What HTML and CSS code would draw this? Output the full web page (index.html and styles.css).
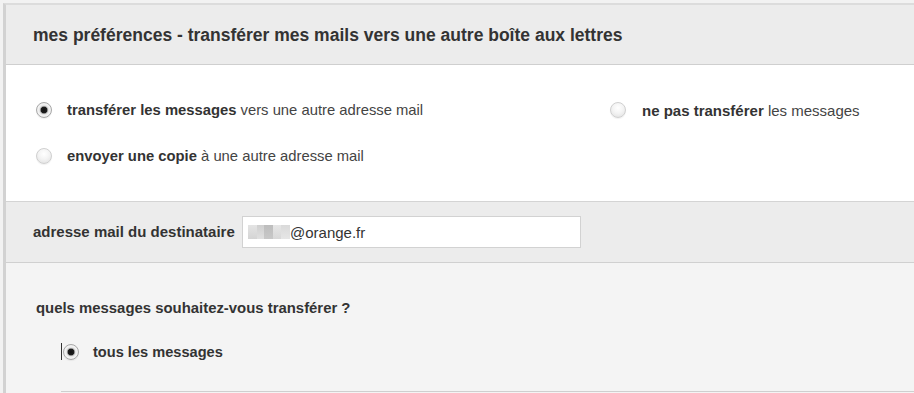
FILE: index.html
```html
<!DOCTYPE html>
<html lang="fr">
<head>
<meta charset="utf-8">
<link rel="stylesheet" href="styles.css">
</head>
<body>
<div class="page">
  <div class="header">
    <h1 class="title">mes préférences - transférer mes mails vers une autre boîte aux lettres</h1>
  </div>
  <div class="options">
    <div class="col col-left">
      <div class="opt"><span class="radio checked"></span><span class="label"><b>transférer les messages</b> vers une autre adresse mail</span></div>
      <div class="opt"><span class="radio"></span><span class="label"><b>envoyer une copie</b> à une autre adresse mail</span></div>
    </div>
    <div class="col col-right">
      <div class="opt"><span class="radio"></span><span class="label"><b>ne pas transférer</b> les messages</span></div>
    </div>
  </div>
  <div class="dest">
    <span class="dest-label">adresse mail du destinataire</span>
    <div class="input"><span class="blur"><i class="b1"></i><i class="b2"></i><i class="b3"></i><i class="b4"></i><i class="b5"></i></span>@orange.fr</div>
  </div>
  <div class="which">
    <div class="question">quels messages souhaitez-vous transférer ?</div>
    <div class="sub">
      <div class="opt opt-sub"><span class="caret"></span><span class="radio checked"></span><span class="label"><b>tous les messages</b></span></div>
    </div>
  </div>
</div>
</body>
</html>
```
FILE: styles.css
```css
html, body {
  margin: 0;
  padding: 0;
  background: #f2f2f2;
  font-family: "Liberation Sans", Arial, sans-serif;
  color: #333;
}
.page {
  margin: 3px 0 0 3px;
  border-left: 3px solid #d2d2d2;
  border-top: 2px solid #dcdcdc;
  height: 400px;
  background: #f4f4f4;
}
.header {
  background: #ececec;
  height: 59px;
  border-bottom: 1px solid #cfcfcf;
  display: flex;
  align-items: center;
  padding-left: 27px;
}
.title {
  margin: 0;
  font-size: 17.5px;
  font-weight: bold;
  color: #333;
  position: relative;
  top: 1px;
}
.options {
  background: #fff;
  height: 136px;
  border-bottom: 1px solid #d4d4d4;
  display: flex;
  padding-left: 30px;
}
.col {
  display: flex;
  flex-direction: column;
  gap: 22px;
  padding-top: 33px;
}
.col-left { width: 574px; }
.opt {
  display: flex;
  align-items: center;
  height: 24px;
  font-size: 14.8px;
  color: #444;
}
.col-right .opt { font-size: 15px; }
.opt b { color: #333; }
.radio {
  width: 16px;
  height: 16px;
  border-radius: 50%;
  border: 1px solid #d0d0d0;
  background: radial-gradient(circle at 50% 35%, #ffffff 0%, #f4f4f4 45%, #dedede 100%);
  box-sizing: border-box;
  margin-right: 15px;
  flex: none;
  box-shadow: 0 1px 1px rgba(0,0,0,0.06);
}
.col-right .radio { margin-right: 16px; }
.radio.checked {
  border-color: #a8a8a8;
  background: radial-gradient(circle, #111 0, #1e1e1e 3px, #9a9a9a 3.6px, #e4e4e4 4.5px, #f4f4f4 6px, #d6d6d6 100%);
}
.dest {
  background: #ececec;
  height: 60px;
  border-bottom: 1px solid #d0d0d0;
  display: flex;
  align-items: center;
  padding-left: 27px;
}
.dest-label {
  font-weight: bold;
  font-size: 15px;
  color: #333;
  width: 209px;
  position: relative;
  top: -1px;
}
.input {
  width: 339px;
  height: 32px;
  box-sizing: border-box;
  background: #fff;
  border: 1px solid #d2d2d2;
  display: flex;
  align-items: center;
  padding-left: 5px;
  font-size: 15px;
  color: #333;
}
.blur {
  display: flex;
  height: 14px;
  width: 42px;
}
.blur i { display: block; height: 14px; }
.b1 { width: 9px; background: linear-gradient(#e4e4e4, #d4d4d4); }
.b2 { width: 7px; background: linear-gradient(#cfcfcf, #e0e0e0); }
.b3 { width: 9px; background: linear-gradient(#bdbdbd, #c8c8c8); }
.b4 { width: 8px; background: linear-gradient(#e6e6e6, #d8d8d8); }
.b5 { width: 9px; background: linear-gradient(#dadada, #e6e6e6); }
.which {
  padding: 37px 0 0 30px;
}
.question {
  font-weight: bold;
  font-size: 14.9px;
  color: #333;
  height: 18px;
}
.sub {
  margin-left: 25px;
  margin-top: 22px;
  border-bottom: 1px solid #cfcfcf;
  padding-bottom: 27px;
}
.opt-sub {
  position: relative;
  padding-left: 2px;
  font-size: 14.6px;
}
.caret {
  position: absolute;
  left: 0;
  top: 3px;
  width: 1px;
  height: 17px;
  background: #333;
}
.opt-sub .radio { margin-right: 14px; }
```
